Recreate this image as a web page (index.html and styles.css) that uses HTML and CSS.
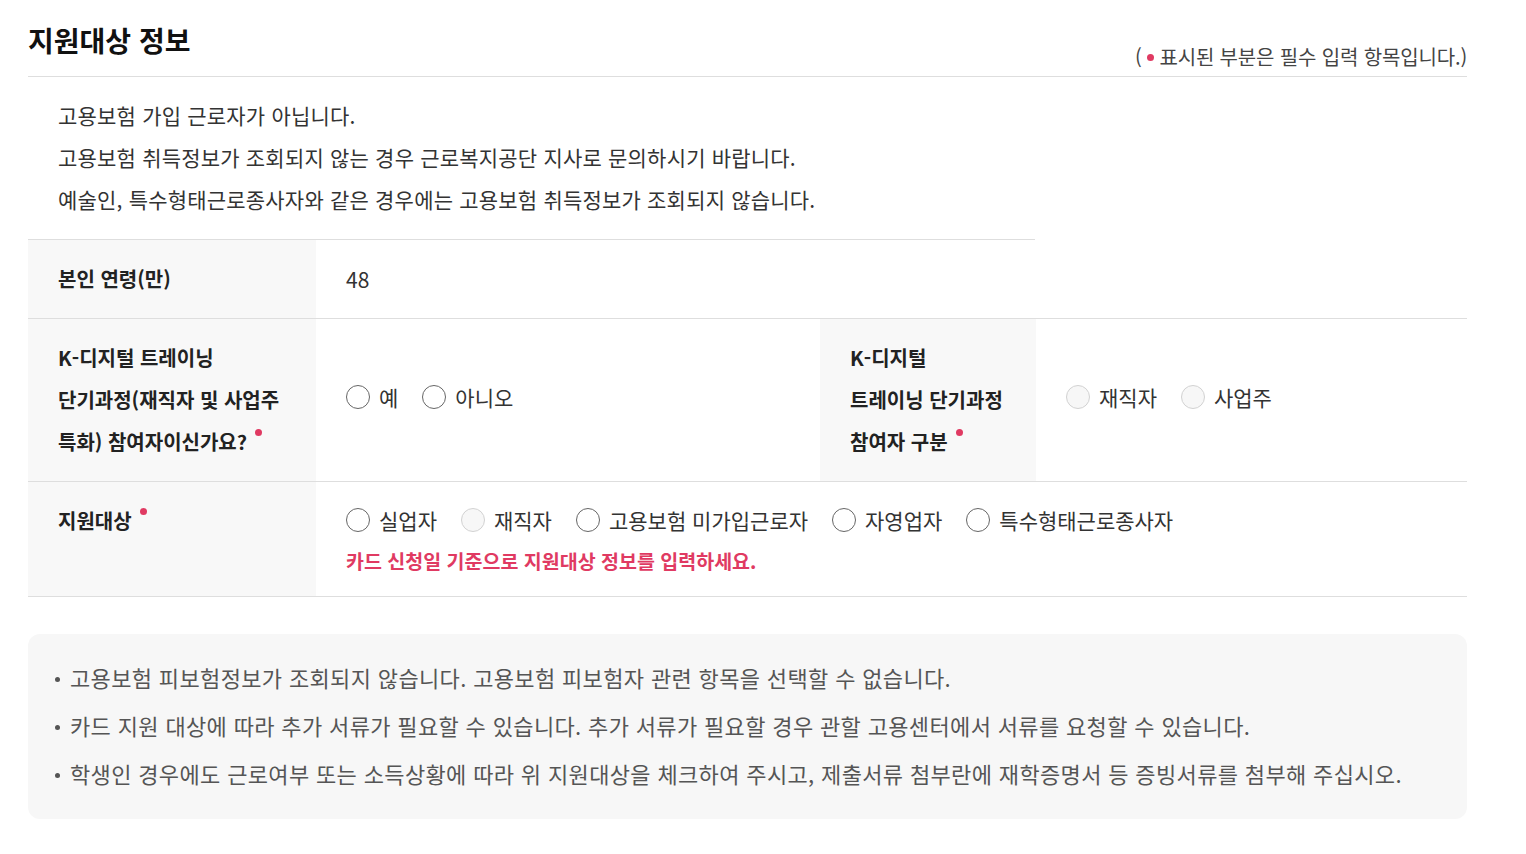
FILE: index.html
```html
<!DOCTYPE html>
<html lang="ko">
<head>
<meta charset="utf-8">
<title>지원대상 정보</title>
<link rel="stylesheet" href="styles.css">
</head>
<body>
<div class="page">
  <div class="header">
    <h2 class="title">지원대상 정보</h2>
    <p class="req-note">( <span class="dot"></span> 표시된 부분은 필수 입력 항목입니다.)</p>
  </div>

  <div class="intro">
    <p>고용보험 가입 근로자가 아닙니다.</p>
    <p>고용보험 취득정보가 조회되지 않는 경우 근로복지공단 지사로 문의하시기 바랍니다.</p>
    <p>예술인, 특수형태근로종사자와 같은 경우에는 고용보험 취득정보가 조회되지 않습니다.</p>
  </div>

  <div class="table">
    <div class="row row-age">
      <div class="th">본인 연령(만)</div>
      <div class="td td-wide">48</div>
    </div>
    <div class="row row-kd">
      <div class="th">K-디지털 트레이닝<br>단기과정(재직자 및 사업주<br>특화) 참여자이신가요?<span class="dot req"></span></div>
      <div class="td td-mid">
        <div class="radios">
          <label class="radio"><span class="circle"></span>예</label>
          <label class="radio"><span class="circle"></span>아니오</label>
        </div>
      </div>
      <div class="th th-narrow">K-디지털<br>트레이닝 단기과정<br>참여자 구분<span class="dot req"></span></div>
      <div class="td td-mid">
        <div class="radios">
          <label class="radio disabled"><span class="circle"></span>재직자</label>
          <label class="radio disabled"><span class="circle"></span>사업주</label>
        </div>
      </div>
    </div>
    <div class="row row-target">
      <div class="th">지원대상<span class="dot req"></span></div>
      <div class="td td-wide">
        <div class="radios">
          <label class="radio"><span class="circle"></span>실업자</label>
          <label class="radio disabled"><span class="circle"></span>재직자</label>
          <label class="radio"><span class="circle"></span>고용보험 미가입근로자</label>
          <label class="radio"><span class="circle"></span>자영업자</label>
          <label class="radio"><span class="circle"></span>특수형태근로종사자</label>
        </div>
        <p class="warn">카드 신청일 기준으로 지원대상 정보를 입력하세요.</p>
      </div>
    </div>
  </div>

  <ul class="notes">
    <li>고용보험 피보험정보가 조회되지 않습니다. 고용보험 피보험자 관련 항목을 선택할 수 없습니다.</li>
    <li>카드 지원 대상에 따라 추가 서류가 필요할 수 있습니다. 추가 서류가 필요할 경우 관할 고용센터에서 서류를 요청할 수 있습니다.</li>
    <li>학생인 경우에도 근로여부 또는 소득상황에 따라 위 지원대상을 체크하여 주시고, 제출서류 첨부란에 재학증명서 등 증빙서류를 첨부해 주십시오.</li>
  </ul>
</div>
</body>
</html>
```

FILE: styles.css
```css
* { box-sizing: border-box; }
html, body { margin: 0; padding: 0; background: #fff; }
body {
  font-family: "Noto Sans CJK KR", "Noto Sans", sans-serif;
  color: #333;
}
.page {
  width: 1439px;
  margin-left: 28px;
}
.header {
  height: 77px;
  border-bottom: 1px solid #dedede;
  display: flex;
  justify-content: space-between;
}
.title {
  margin: 0;
  padding-top: 21px;
  font-size: 28px;
  line-height: 38px;
  font-weight: 700;
  color: #111;
}
.req-note {
  margin: 43px 0 0;
  font-size: 20px;
  line-height: 28px;
  color: #444;
  letter-spacing: -0.15px;
}
.dot {
  display: inline-block;
  width: 7px;
  height: 7px;
  border-radius: 50%;
  background: #e03a62;
  vertical-align: middle;
  position: relative;
  top: -2px;
}
.intro {
  width: 1007px;
  padding: 17px 30px 19px;
  border-bottom: 1px solid #dedede;
}
.intro p {
  margin: 0;
  font-size: 21px;
  line-height: 42px;
  color: #333;
  letter-spacing: 0.2px;
}
.row {
  display: grid;
  grid-template-columns: 288px 504px 216px 1fr;
  border-bottom: 1px solid #dedede;
}
.th {
  background: #f8f8f8;
  padding: 18px 30px;
  font-size: 20px;
  line-height: 42px;
  font-weight: 700;
  color: #222;
}
.th .req {
  top: -12px;
  margin-left: 8px;
}
.td {
  padding: 18px 30px;
  font-size: 21px;
  line-height: 42px;
  color: #333;
}
.td-wide { grid-column: 2 / 5; }
.td-mid {
  display: flex;
  align-items: center;
  padding-top: 16px;
  padding-bottom: 22px;
}
.radios {
  display: flex;
  gap: 24px;
}
.radio {
  display: flex;
  align-items: center;
  gap: 9px;
  font-size: 21px;
  line-height: 42px;
  color: #333;
}
.circle {
  width: 24px;
  height: 24px;
  border-radius: 50%;
  border: 1.5px solid #666;
  background: #fff;
  flex: none;
}
.radio.disabled .circle {
  border-color: #d2d2d2;
  background: #f7f7f7;
}
.warn {
  margin: 5px 0 0;
  font-size: 19.5px;
  line-height: 30px;
  font-weight: 700;
  color: #e03a62;
}
.row-target .td { padding-top: 17px; padding-bottom: 20px; }
.notes {
  list-style: none;
  margin: 37px 0 0;
  padding: 19px 24px 22px 42px;
  background: #f7f7f7;
  border-radius: 12px;
}
.notes li {
  position: relative;
  font-size: 22px;
  line-height: 48px;
  color: #555;
  letter-spacing: 0.35px;
}
.notes li::before {
  content: "";
  position: absolute;
  left: -15px;
  top: 24px;
  width: 5px;
  height: 5px;
  border-radius: 50%;
  background: #555;
}
```
